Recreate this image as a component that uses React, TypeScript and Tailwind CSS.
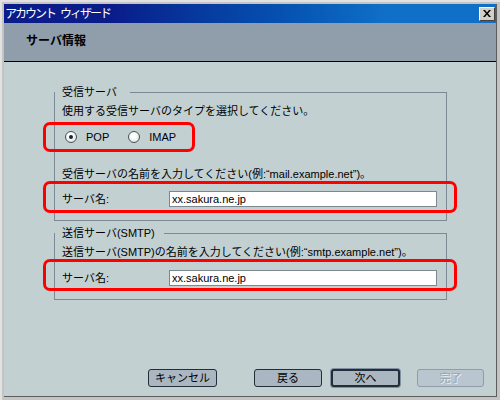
import React from "react";

// Mail account wizard – "server info" page.
// Small bitmap-ish UI: 11px text, square-ish controls, red callout frames
// drawn over the rows that need attention.

const FONT = '"Liberation Sans", "Noto Sans CJK JP", sans-serif';

function Callout({ className }: { className: string }) {
    return (
        <span
            aria-hidden="true"
            className={`pointer-events-none absolute rounded-[7px] border-[3px] border-[#ff0000] ${className}`}
        />
    );
}

function Radio({ label, checked }: { label: string; checked?: boolean }) {
    return (
        <label className="flex items-center gap-[9px]">
            <span className="flex h-[12px] w-[12px] items-center justify-center rounded-full border border-[#4a5358] bg-[radial-gradient(circle_at_45%_40%,#ffffff_30%,#c8d2d6_100%)]">
                {checked && <span className="h-[4px] w-[4px] rounded-full bg-[#1c2428]" />}
            </span>
            <span>{label}</span>
        </label>
    );
}

function ServerField({ callout }: { callout: string }) {
    return (
        <div className="relative flex h-[16px] items-center">
            <Callout className={callout} />
            <span className="w-[107px]">サーバ名:</span>
            <input
                readOnly
                value="xx.sakura.ne.jp"
                className="h-[16px] w-[268px] border border-[#7c8890] bg-white pl-[2px] text-[11px] text-black outline-none"
                style={{ fontFamily: FONT }}
            />
        </div>
    );
}

function WizardButton({
    children,
    focused,
    disabled,
}: {
    children: React.ReactNode;
    focused?: boolean;
    disabled?: boolean;
}) {
    const tone = disabled
        ? "border border-[#8e9cab] bg-[#b9c5cf] text-[#97a5b2] [text-shadow:1px_1px_0_#e6eef2]"
        : focused
          ? "border-2 border-[#252d36] bg-[#aab6c1] text-black shadow-[0_0_0_1px_#7f90a2]"
          : "border border-[#252d36] bg-[#aab6c1] text-black";
    return (
        <button
            disabled={disabled}
            className={`flex h-[18px] w-full items-center justify-center rounded-[3px] text-[11px] leading-none ${tone}`}
        >
            {children}
        </button>
    );
}

export default function App() {
    return (
        <div
            className="flex h-[400px] w-[500px] flex-col border-l-[2px] border-t-[2px] border-[#e2e2e2] bg-[#c4c4c4] pb-[3px] pl-[2px] pr-[3px] pt-[2px] text-[11px] text-black"
            style={{ fontFamily: FONT }}
        >
            <div className="flex flex-1 flex-col border-b border-r border-[#5c5c5c]">
                {/* title bar */}
                <div className="flex h-[19px] items-center justify-between bg-gradient-to-r from-[#0a1c8a] from-[22%] to-[#1070c8] to-[78%] pl-[1px] pr-[1px]">
                    <span className="flex gap-[5px] text-[12px] tracking-[-2px] text-white">
                        <span>アカウント</span>
                        <span>ウィザード</span>
                    </span>
                    <button className="flex h-[14px] w-[16px] items-center justify-center border border-b-[#404040] border-l-white border-r-[#404040] border-t-white bg-[#d4d0c8]">
                        <svg width="8" height="7" viewBox="0 0 8 7">
                            <path d="M0 0h2l2 2.5L6 0h2L5 3.5 8 7H6L4 4.5 2 7H0l3-3.5z" fill="#000" />
                        </svg>
                    </button>
                </div>

                {/* page header */}
                <div className="h-[39px] border-b border-black bg-[#909eac] pl-[22px] pt-[9px]">
                    <span className="text-[12px] font-bold">サーバ情報</span>
                </div>

                {/* page body */}
                <div className="flex flex-1 flex-col bg-[#c2d0d2]">
                    <div className="pl-[50px] pt-[23px]">
                        <fieldset className="w-[393px] border border-[#7d8a94] pb-[13px]">
                            <legend className="h-[14px] pl-[7px] pr-[13px] leading-[14px]">受信サーバ</legend>
                            <div className="pl-[7px]">
                                <p className="mt-[4px] h-[16px] leading-[16px]">
                                    使用する受信サーバのタイプを選択してください。
                                </p>
                                <div className="relative mt-[10px] flex h-[16px] items-center gap-[19px] pl-[3px]">
                                    <Callout className="-left-[19px] -top-[7px] h-[30px] w-[152px]" />
                                    <Radio label="POP" checked />
                                    <Radio label="IMAP" />
                                </div>
                                <p className="mt-[21px] h-[16px] leading-[16px]">
                                    受信サーバの名前を入力してください(例:“mail.example.net”)。
                                </p>
                                <div className="mt-[9px]">
                                    <ServerField callout="-left-[19px] -top-[10px] h-[32px] w-[414px]" />
                                </div>
                            </div>
                        </fieldset>

                        <fieldset className="mt-[5px] w-[393px] border border-[#7d8a94] pb-[13px]">
                            <legend className="h-[14px] pl-[7px] pr-[9px] leading-[14px]">送信サーバ(SMTP)</legend>
                            <div className="pl-[7px]">
                                <p className="mt-[4px] h-[16px] leading-[16px]">
                                    送信サーバ(SMTP)の名前を入力してください(例:“smtp.example.net”)。
                                </p>
                                <div className="mt-[10px]">
                                    <ServerField callout="-left-[19px] -top-[11px] h-[32px] w-[414px]" />
                                </div>
                            </div>
                        </fieldset>
                    </div>

                    {/* wizard buttons */}
                    <div className="mt-auto flex items-center justify-end pb-[9px] pr-[12px]">
                        <div className="mr-[37px] w-[69px]">
                            <WizardButton>キャンセル</WizardButton>
                        </div>
                        <div className="mr-[9px] w-[68px]">
                            <WizardButton>戻る</WizardButton>
                        </div>
                        <div className="mr-[17px] w-[69px]">
                            <WizardButton focused>次へ</WizardButton>
                        </div>
                        <div className="w-[67px]">
                            <WizardButton disabled>完了</WizardButton>
                        </div>
                    </div>
                </div>
            </div>
        </div>
    );
}
